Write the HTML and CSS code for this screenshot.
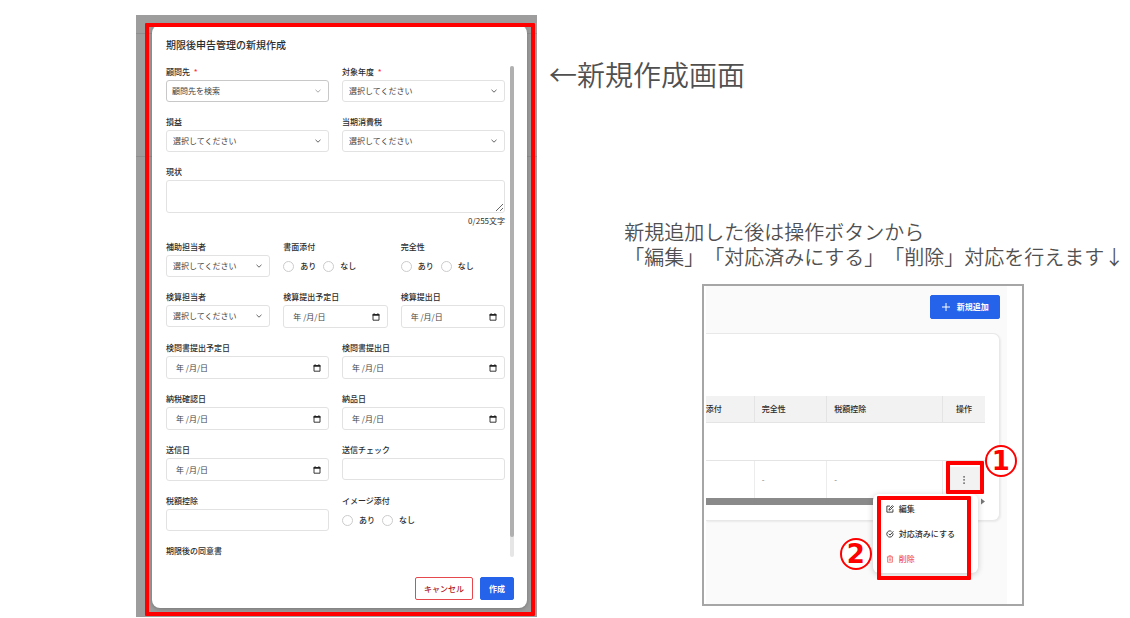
FILE: index.html
```html
<!DOCTYPE html>
<html lang="ja">
<head>
<meta charset="utf-8">
<title>期限後申告管理</title>
<link rel="stylesheet" href="styles.css">
</head>
<body>
<svg class="sprite" aria-hidden="true">
  <symbol id="chevron" viewBox="0 0 8 8"><path d="M1.5 2.8 4 5.2 6.500 2.800" fill="none" stroke="currentColor" stroke-width="1"/></symbol>
  <symbol id="calendar" viewBox="0 0 8 8"><path d="M1 1.500h6V7.200H1z" fill="none" stroke="currentColor" stroke-width=".9"/><path d="M.6 1h6.800v1.800H.6zM1.600.3h1v1h-1zM5.400.3h1v1h-1z" fill="currentColor"/></symbol>
</svg>
<main class="page">
  <section class="backdrop">
    <form class="dialog">
      <h1 class="dialog-title">期限後申告管理の新規作成</h1>
      <div class="dialog-body">
        <div class="fields">
          <div class="row two">
            <div class="field"><label for="client">顧問先 <span class="required">*</span></label><div class="control"><select id="client" class="search"><option>顧問先を検索</option></select><svg class="chevron pale"><use href="#chevron"/></svg></div></div>
            <div class="field"><label for="year">対象年度 <span class="required">*</span></label><div class="control"><select id="year"><option>選択してください</option></select><svg class="chevron"><use href="#chevron"/></svg></div></div>
          </div>
          <div class="row two">
            <div class="field"><label for="profit">損益</label><div class="control"><select id="profit"><option>選択してください</option></select><svg class="chevron"><use href="#chevron"/></svg></div></div>
            <div class="field"><label for="tax">当期消費税</label><div class="control"><select id="tax"><option>選択してください</option></select><svg class="chevron"><use href="#chevron"/></svg></div></div>
          </div>
          <div class="row">
            <div class="field"><label for="status">現状</label><textarea id="status"></textarea><div class="counter">0/255文字</div></div>
          </div>
          <div class="row three">
            <div class="field"><label for="assist">補助担当者</label><div class="control"><select id="assist"><option>選択してください</option></select><svg class="chevron"><use href="#chevron"/></svg></div></div>
            <div class="field" role="group" aria-labelledby="doc"><span class="label" id="doc">書面添付</span><div class="radios"><label><input type="radio" name="doc">あり</label><label><input type="radio" name="doc">なし</label></div></div>
            <div class="field" role="group" aria-labelledby="comp"><span class="label" id="comp">完全性</span><div class="radios"><label><input type="radio" name="comp">あり</label><label><input type="radio" name="comp">なし</label></div></div>
          </div>
          <div class="row three">
            <div class="field"><label for="checker">検算担当者</label><div class="control"><select id="checker"><option>選択してください</option></select><svg class="chevron"><use href="#chevron"/></svg></div></div>
            <div class="field"><label for="d1">検算提出予定日</label><div class="control"><input type="text" class="date" id="d1" placeholder="年 /月/日"><svg class="calendar"><use href="#calendar"/></svg></div></div>
            <div class="field"><label for="d2">検算提出日</label><div class="control"><input type="text" class="date" id="d2" placeholder="年 /月/日"><svg class="calendar"><use href="#calendar"/></svg></div></div>
          </div>
          <div class="row two">
            <div class="field"><label for="d3">検問書提出予定日</label><div class="control"><input type="text" class="date" id="d3" placeholder="年 /月/日"><svg class="calendar"><use href="#calendar"/></svg></div></div>
            <div class="field"><label for="d4">検問書提出日</label><div class="control"><input type="text" class="date" id="d4" placeholder="年 /月/日"><svg class="calendar"><use href="#calendar"/></svg></div></div>
          </div>
          <div class="row two">
            <div class="field"><label for="d5">納税確認日</label><div class="control"><input type="text" class="date" id="d5" placeholder="年 /月/日"><svg class="calendar"><use href="#calendar"/></svg></div></div>
            <div class="field"><label for="d6">納品日</label><div class="control"><input type="text" class="date" id="d6" placeholder="年 /月/日"><svg class="calendar"><use href="#calendar"/></svg></div></div>
          </div>
          <div class="row two">
            <div class="field"><label for="d7">送信日</label><div class="control"><input type="text" class="date" id="d7" placeholder="年 /月/日"><svg class="calendar"><use href="#calendar"/></svg></div></div>
            <div class="field"><label for="sendcheck">送信チェック</label><div class="control"><input type="text" id="sendcheck"></div></div>
          </div>
          <div class="row two">
            <div class="field"><label for="credit">税額控除</label><div class="control"><input type="text" id="credit"></div></div>
            <div class="field" role="group" aria-labelledby="img"><span class="label" id="img">イメージ添付</span><div class="radios"><label><input type="radio" name="img">あり</label><label><input type="radio" name="img">なし</label></div></div>
          </div>
          <div class="row"><span class="label">期限後の同意書</span></div>
        </div>
        <div class="scroll-track"><div class="scroll-thumb"></div></div>
      </div>
      <div class="dialog-footer">
        <button type="button" class="btn cancel">キャンセル</button>
        <button type="button" class="btn primary">作成</button>
      </div>
    </form>
    <div class="mark mark-dialog"></div>
  </section>

  <section class="notes">
    <h2 class="caption-large">←新規作成画面</h2>
    <p class="caption">新規追加した後は操作ボタンから<br>「編集」「対応済みにする」「削除」対応を行えます↓</p>
    <div class="panel">
      <div class="panel-inner">
        <div class="toolbar"><button type="button" class="btn primary add"><svg viewBox="0 0 8 8" class="plus"><path d="M4 0v8M0 4h8" stroke="currentColor" stroke-width="1"/></svg>新規追加</button></div>
        <div class="card">
          <table>
            <colgroup><col class="c1"><col class="c2"><col class="c3"><col class="c4"></colgroup>
            <thead><tr><th>添付</th><th>完全性</th><th>税額控除</th><th>操作</th></tr></thead>
            <tbody>
              <tr class="blank"><td colspan="4"></td></tr>
              <tr><td></td><td>-</td><td>-</td><td><button type="button" class="kebab" aria-label="操作"><svg viewBox="0 0 8 8"><path d="M3.400.2h1.300v1.300H3.400zM3.400 3.300h1.300v1.300H3.400zM3.400 6.400h1.300v1.300H3.400z" fill="currentColor"/></svg></button></td></tr>
            </tbody>
          </table>
          <div class="hscroll"><div class="hscroll-thumb"></div><svg viewBox="0 0 4 7"><path d="M0 .5v6L4 3.500z" fill="#777"/></svg></div>
        </div>
      </div>
      <div class="menu">
        <button type="button"><svg viewBox="0 0 9 9"><path d="M4.500 1.200H1v6.800h6.800V4.800M3.300 5.800l.3-1.500L7.200.7l1.100 1.100-3.600 3.600z" fill="none" stroke="currentColor"/></svg>編集</button>
        <button type="button"><svg viewBox="0 0 9 9"><path d="M7.800 3.700A3.500 3.500 0 1 1 6.200 1.500M3 4.200l1.500 1.500L8.300 1.500" fill="none" stroke="currentColor"/></svg>対応済みにする</button>
        <button type="button" class="danger"><svg viewBox="0 0 9 9"><path d="M1 2.200h7M3.200 2V.9h2.600V2M1.800 2.200v5.900h5.400V2.200M3.700 3.800v2.700M5.300 3.800v2.700" fill="none" stroke="currentColor" stroke-width=".9"/></svg>削除</button>
        <div class="mark mark-menu"></div>
      </div>
      <div class="mark mark-action"></div>
      <span class="step step-one">1</span>
      <span class="step step-two">2</span>
    </div>
  </section>
</main>
</body>
</html>
```
FILE: styles.css
```css
* { box-sizing: border-box; }
body {
  margin: 0;
  background: #fff;
  color: #2c2c2c;
  font: 8px/12px "Noto Sans CJK JP", sans-serif;
  overflow-x: hidden;
}
button, input, select, textarea { font: inherit; color: inherit; margin: 0; }
.sprite { display: none; }
.page {
  display: grid;
  grid-template-columns: minmax(0, 401fr) minmax(0, 593fr);
  align-items: start;
  padding: 15px 0 0 12.04%;
}

/* dialog */
.backdrop {
  position: relative;
  padding: 10px 10px 9px 16px;
  background: linear-gradient(#8e8e8e, #8e8e8e) 0 18px / 100% 1px no-repeat,
    linear-gradient(#8e8e8e, #8e8e8e) 0 141px / 100% 1px no-repeat, #9d9d9d;
}
.dialog {
  padding: 13px 13px 8px 14px;
  border-radius: 8px;
  background: #fff;
  box-shadow: 0 1px 4px #5558;
}
.dialog-title { margin: 0 0 14px; font-size: 10px; line-height: 14px; font-weight: 500; }
.dialog-body { display: flex; gap: 5px; }
.fields { flex: 1; min-width: 0; display: flex; flex-direction: column; gap: 14px; }
.scroll-track { width: 4px; border-radius: 2px; background: #e6e6e6; }
.scroll-thumb { height: 96%; border-radius: 2px; background: #b0b0b0; }
.row { display: grid; gap: 13px; }
.two { grid-template-columns: repeat(2, minmax(0, 1fr)); }
.three { grid-template-columns: repeat(3, minmax(0, 1fr)); }
.field { display: flex; flex-direction: column; gap: 2px; }
.field > label, .label { font-weight: 500; }
.required { margin-left: 2px; color: #f33; }
.control { position: relative; display: flex; }
.control svg { position: absolute; width: 8px; height: 8px; top: 7px; pointer-events: none; }
.control .chevron { right: 7px; color: #666; }
.control .pale { color: #aaa; }
.control .calendar { right: 8px; top: 8px; color: #222; }
select, input[type="text"], textarea {
  width: 100%;
  height: 22px;
  padding: 0 6px;
  border: 1px solid #e2e2e2;
  border-radius: 3px;
  background: #fff;
  color: #444;
  outline: 0;
}
select { appearance: none; }
.search { padding: 0 5px; border-color: #c8c8c8; }
input.date { height: 23px; padding: 0 9px; }
.date::placeholder { color: #444; opacity: 1; }
textarea { display: block; height: 33px; }
.counter { text-align: right; }
.radios { display: flex; align-items: center; gap: 7px; height: 22px; font-weight: 500; }
.radios label { display: flex; align-items: center; gap: 6px; }
input[type="radio"] {
  appearance: none;
  width: 11px;
  height: 11px;
  border: 1px solid #ccc;
  border-radius: 50%;
  background: #fff;
}
.dialog-footer { display: flex; justify-content: flex-end; gap: 7px; margin-top: 20px; }
.btn { height: 23px; padding: 0 8px; border: 1px solid; border-radius: 2px; font-weight: 500; white-space: nowrap; }
.cancel { border-color: #e5484d; background: #fff; color: #b02025; }
.primary { border-color: #2563eb; background: #2563eb; color: #fff; font-weight: 700; }

/* annotations */
.mark { position: absolute; border: 4px solid #f00; border-radius: 1px; pointer-events: none; }
.mark-dialog { inset: 8px 2px 1px 9px; }
.mark-action { top: 175px; right: 38px; width: 38px; height: 33px; }
.mark-menu { top: 2px; left: 4px; width: 94px; height: 84px; }
.step {
  position: absolute;
  display: grid;
  place-items: center;
  width: 32px;
  height: 32px;
  border: 2px solid #f00;
  border-radius: 50%;
  background: #fff;
  color: #f00;
  font: 700 26px/28px "DejaVu Sans", sans-serif;
}
.step-one { top: 159px; right: 5px; }
.step-two { top: 252px; right: 150px; }

/* notes */
.caption-large, .caption { font-weight: 350; color: #505050; white-space: nowrap; text-spacing-trim: space-all; }
.caption-large { margin: 39px 0 0 12px; font-size: 28px; line-height: 40px; }
.caption { margin: 125px 0 0 14.7%; font-size: 20px; line-height: 25px; }
.panel {
  position: relative;
  width: 54.3%;
  margin: 15px 0 0 27.8%;
  padding: 0 15px 0 2px;
  border: 2px solid #a6a6a6;
}
.panel-inner { padding: 9px 7px 83px 0; background: #fafafa; }
.toolbar { display: flex; justify-content: flex-end; margin-bottom: 14px; }
.add { display: flex; align-items: center; gap: 7px; height: 24px; padding: 0 10px 0 11px; }
.plus { width: 8px; height: 8px; }
.card {
  padding: 62px 14px 15px 0;
  border: 1px solid #e8e8e8;
  border-left: 0;
  border-radius: 0 7px 7px 0;
  background: #fff;
  box-shadow: 1px 1px 2px #0001;
}
table { width: 100%; table-layout: fixed; border-collapse: separate; border-spacing: 0; }
.c1 { width: 17.5%; }
.c2 { width: 26%; }
.c3 { width: 41.5%; }
.c4 { width: 15%; }
th { height: 27px; padding: 0 7px; border-right: 1px solid #e4e4e4; border-bottom: 1px solid #e4e4e4; background: #f2f2f2; text-align: left; font-weight: 500; }
th:first-child { padding: 0; }
th:last-child { border-right: 0; text-align: center; padding: 0; }
td { height: 37px; padding: 0 7px; border-right: 1px solid #ececec; color: #777; }
td:last-child { border-right: 0; padding: 0 5px; }
.blank td { height: 38px; border-bottom: 1px solid #e4e4e4; }
.kebab { display: grid; place-items: center; width: 100%; height: 25px; padding: 0; border: 0; background: #f2f2f2; color: #222; }
.kebab svg { width: 8px; height: 8px; }
.hscroll { display: flex; align-items: center; gap: 6px; }
.hscroll-thumb { flex: 1; height: 7px; background: #8a8a8a; }
.hscroll svg { width: 4px; height: 7px; }
.menu {
  position: absolute;
  top: 208px;
  right: 44px;
  width: 105px;
  padding: 2px 4px;
  border-radius: 6px;
  background: #fff;
  box-shadow: 0 1px 6px #0003;
}
.menu button { display: flex; align-items: center; gap: 5px; width: 100%; height: 25px; padding: 0 9px; border: 0; background: none; font-weight: 500; white-space: nowrap; }
.menu button svg { width: 8px; height: 8px; }
.menu .danger { color: #f0595c; }
```
